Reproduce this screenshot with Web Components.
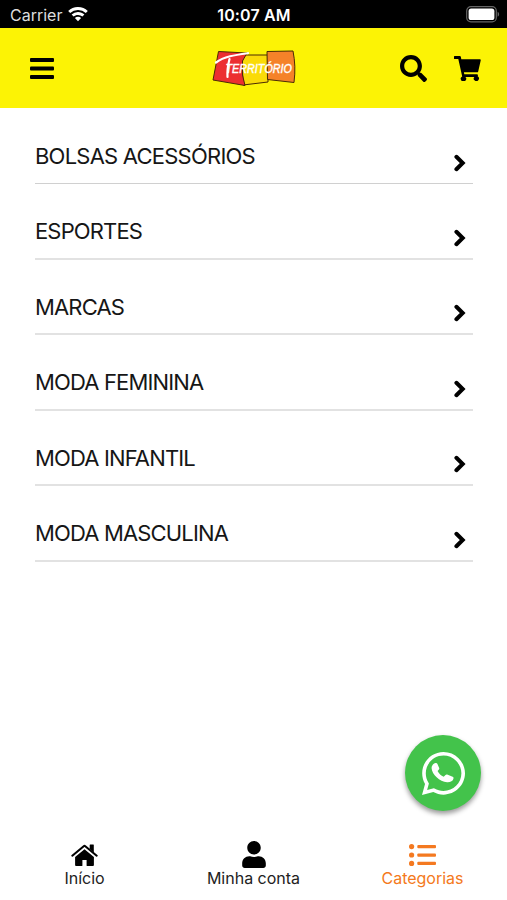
<!DOCTYPE html>
<html lang="pt-BR">
<head>
<meta charset="utf-8">
<title>Território</title>
<style>
  html, body {
    margin: 0;
    height: 100%;
    background: #fff;
    font-family: Inter, "Liberation Sans", sans-serif;
  }
</style>
</head>
<body>
<store-app></store-app>

<script>
const ICONS = {
  wifi: `<svg viewBox="0 0 20 15"><path fill="#fff" d="M10 0c3.9 0 7.3 1.5 9.8 3.9l-2 2.1A11.2 11.2 0 0 0 10 2.9 11.2 11.2 0 0 0 2.2 6l-2-2.1A14 14 0 0 1 10 0zM10 5c2.5 0 4.7.9 6.4 2.5l-2 2.1A6.3 6.3 0 0 0 10 7.9c-1.7 0-3.3.6-4.4 1.7l-2-2.1A9.2 9.2 0 0 1 10 5zM10 9.8c1.2 0 2.3.4 3.1 1.2L10 14.3 6.9 11c.8-.8 1.9-1.2 3.1-1.2z"/></svg>`,
  battery: `<svg viewBox="0 0 34 17"><rect x=".7" y=".7" width="29.6" height="15.2" rx="4.2" fill="none" stroke="#666" stroke-width="1.2"/><rect x="2.6" y="2.6" width="25.8" height="11.4" rx="2.6" fill="#fff"/><path fill="#666" d="M31.6 5.8c2 .9 2 4.1 0 5z"/></svg>`,
  menu: `<svg viewBox="0 0 24 21"><rect width="24" height="4" rx="1"/><rect y="8.5" width="24" height="4" rx="1"/><rect y="17" width="24" height="4" rx="1"/></svg>`,
  search: `<svg viewBox="0 0 512 512"><path d="M505 442.7L405.3 343c-4.5-4.5-10.6-7-17-7H372c27.6-35.3 44-79.7 44-128C416 93.1 322.9 0 208 0S0 93.1 0 208s93.1 208 208 208c48.3 0 92.7-16.4 128-44v16.3c0 6.4 2.5 12.5 7 17l99.7 99.7c9.4 9.4 24.6 9.4 33.9 0l28.3-28.3c9.4-9.4 9.4-24.6.1-34zM208 336c-70.7 0-128-57.2-128-128 0-70.7 57.2-128 128-128 70.7 0 128 57.2 128 128 0 70.7-57.2 128-128 128z"/></svg>`,
  cart: `<svg viewBox="0 0 27 25"><path d="M.6 0h5.2c.6 0 .9.3 1 .8l.5 2.5h18.4c.8 0 1.2.6 1 1.3l-2.5 10.8c-.1.6-.5.9-1.1.9H9.9l.4 1.9h12.6c.8 0 1.2.5 1 1.2l-.2.9a2.6 2.6 0 1 1-3.4.6H11.4a2.7 2.7 0 1 1-3.2-.5L4.3 3H.6C.2 3 0 2.7 0 2.4V.6C0 .2.2 0 .6 0z"/></svg>`,
  chevron: `<svg viewBox="0 0 12 18"><path d="M2.4 2.8 8.7 9l-6.3 6.2" fill="none" stroke="#000" stroke-width="4" stroke-linecap="round"/></svg>`,
  home: `<svg viewBox="0 0 27 22"><path d="M13.5 5.3 22.9 13v8c0 .6-.3 1-.9 1h-5.8c-.4 0-.6-.2-.6-.6V16h-4.2v5.4c0 .4-.2.6-.6.6H5c-.6 0-.9-.4-.9-1v-8z"/><path d="M1.3 11.7 12.7 2.2c.5-.4 1.1-.4 1.6 0l11.4 9.5" fill="none" stroke="#000" stroke-width="2.1" stroke-linecap="round"/><path d="M19.2.6h3.1c.3 0 .5.2.5.5v7.3l-4.1-3.5V1.1c0-.3.2-.5.5-.5z"/></svg>`,
  user: `<svg viewBox="0 0 448 512"><path d="M224 256c70.7 0 128-57.3 128-128S294.7 0 224 0 96 57.3 96 128s57.3 128 128 128zm89.6 32h-16.7c-22.2 10.2-46.9 16-72.9 16s-50.6-5.8-72.9-16h-16.7C60.2 288 0 348.2 0 422.4V464c0 26.5 21.5 48 48 48h352c26.5 0 48-21.5 48-48v-41.6c0-74.2-60.2-134.4-134.4-134.4z"/></svg>`,
  list: `<svg viewBox="0 0 27 22" fill="#f47920"><circle cx="2.6" cy="2.6" r="2.6"/><circle cx="2.6" cy="11" r="2.6"/><circle cx="2.6" cy="19.4" r="2.6"/><rect x="8.3" y="1" width="18.7" height="3.3" rx="1"/><rect x="8.3" y="9.4" width="18.7" height="3.3" rx="1"/><rect x="8.3" y="17.8" width="18.7" height="3.3" rx="1"/></svg>`,
  whatsapp: `<svg viewBox="0 32 448 448" fill="#fff"><path d="M380.9 97.1C339 55.1 283.2 32 223.9 32c-122.4 0-222 99.6-222 222 0 39.1 10.2 77.3 29.6 111L0 480l117.7-30.9c32.4 17.7 68.9 27 106.1 27h.1c122.3 0 224.1-99.6 224.1-222 0-59.3-25.2-115-67.1-157zm-157 341.6c-33.2 0-65.7-8.9-94-25.7l-6.7-4-69.8 18.3L72 359.2l-4.4-7c-18.5-29.4-28.2-63.3-28.2-98.2 0-101.7 82.8-184.5 184.6-184.5 49.3 0 95.6 19.2 130.4 54.1 34.8 34.9 56.2 81.2 56.1 130.5 0 101.8-84.9 184.6-186.6 184.6z"/><path d="M123 154c10-11 31-13 38 3l17 38c4 9 2 15-4 22l-12 14c14 27 36 47 64 60l19-20c5-5 10-7 17-4l57 22c9 4 11 9 9 18-4 28-36 42-66 40-79-9-158-82-162-147-1-20 10-35 23-46z"/></svg>`
};

class AppIcon extends HTMLElement {
  connectedCallback() {
    let shadowRoot = this.attachShadow({ mode: "open" });
    shadowRoot.innerHTML = `
      <style>
        :host { display: block; flex: none; }
        svg { display: block; width: 100%; height: 100%; }
      </style>
      ${ICONS[this.getAttribute("name")]}
    `;
  }
}

class StatusBar extends HTMLElement {
  connectedCallback() {
    let shadowRoot = this.attachShadow({ mode: "open" });
    shadowRoot.innerHTML = `
      <style>
        :host {
          display: grid;
          grid-template-columns: 1fr auto 1fr;
          align-items: center;
          box-sizing: border-box;
          height: 28px;
          padding: 2px 7px 0 10px;
          background: #000;
          color: #ddd;
          font-size: 16px;
        }
        .carrier { display: flex; align-items: center; gap: 6px; }
        .time { color: #fff; font-weight: 600; letter-spacing: 0.15px; margin-left: -2px; }
        .wifi { width: 20px; height: 15px; margin-top: -1px; }
        .battery { width: 34px; height: 17px; justify-self: end; margin-top: -2px; }
      </style>
      <div class="carrier"><span>Carrier</span><app-icon class="wifi" name="wifi"></app-icon></div>
      <div class="time">10:07 AM</div>
      <app-icon class="battery" name="battery"></app-icon>
    `;
  }
}

class StoreLogo extends HTMLElement {
  connectedCallback() {
    let shadowRoot = this.attachShadow({ mode: "open" });
    shadowRoot.innerHTML = `
      <style>
        :host { display: block; width: 84px; height: 37px; }
        svg { display: block; overflow: visible; }
        text {
          font-family: "Liberation Sans", sans-serif;
          font-size: 12.5px;
          font-style: italic;
          fill: #fff;
          stroke: #fff;
          stroke-width: 0.4;
        }
      </style>
      <svg width="84" height="37" viewBox="0 0 84 37">
        <g stroke="#4a2a05" stroke-width="1" stroke-linejoin="round">
          <path fill="#fadb08" d="M30 5h26v27L31 35z"/>
          <path fill="#ec2f31" d="M6.5 1.5 35 3l-4.5 8v14l2.5 10.5L1 30z"/>
          <path fill="#f58229" d="M55 1.5 81 1c2 10 2.5 20 1 31.5L55.5 29.5z"/>
        </g>
        <path d="M4 12.5C12 6.5 23 5 36 3.2M17.5 9c-1.5 6-2.5 11-2 18" fill="none" stroke="#fff" stroke-width="2.2" stroke-linecap="round"/>
        <text x="13.5" y="22.5" textLength="66.5" lengthAdjust="spacingAndGlyphs">TERRITÓRIO</text>
      </svg>
    `;
  }
}

class AppHeader extends HTMLElement {
  connectedCallback() {
    let shadowRoot = this.attachShadow({ mode: "open" });
    shadowRoot.innerHTML = `
      <style>
        :host {
          display: grid;
          grid-template-columns: 1fr auto 1fr;
          align-items: center;
          box-sizing: border-box;
          height: 80px;
          padding: 0 26.5px 0 29.5px;
          background: #fcf305;
        }
        .menu { width: 24px; height: 21px; }
        store-logo { margin-left: -2px; }
        .actions { display: flex; justify-content: flex-end; align-items: center; gap: 27px; }
        .search { width: 27px; height: 27px; }
        .cart { width: 27px; height: 25px; }
      </style>
      <app-icon class="menu" name="menu"></app-icon>
      <store-logo></store-logo>
      <div class="actions">
        <app-icon class="search" name="search"></app-icon>
        <app-icon class="cart" name="cart"></app-icon>
      </div>
    `;
  }
}

class CategoryItem extends HTMLElement {
  connectedCallback() {
    let shadowRoot = this.attachShadow({ mode: "open" });
    shadowRoot.innerHTML = `
      <style>
        :host {
          display: flex;
          justify-content: space-between;
          align-items: flex-end;
          box-sizing: border-box;
          height: 75.5px;
          padding: 0 7px 12px 0;
          border-bottom: 2px solid #e2e2e2;
          color: #161616;
          font-size: 22px;
          letter-spacing: -0.85px;
        }
        :host(:first-of-type) {
          height: 76px;
          padding-bottom: 12.25px;
          border-bottom: 1px solid #d0d0d0;
          letter-spacing: -0.77px;
        }
        .label { line-height: 30px; margin-bottom: -0.5px; }
        app-icon { width: 12px; height: 18px; margin-bottom: -1px; }
      </style>
      <span class="label"><slot></slot></span>
      <app-icon name="chevron"></app-icon>
    `;
  }
}

class WhatsappButton extends HTMLElement {
  connectedCallback() {
    let shadowRoot = this.attachShadow({ mode: "open" });
    shadowRoot.innerHTML = `
      <style>
        :host {
          position: absolute;
          right: 26px;
          bottom: 89px;
          display: flex;
          align-items: center;
          justify-content: center;
          width: 76px;
          height: 76px;
          border-radius: 50%;
          background: #43c34b;
          box-shadow: 0 3px 5px rgba(0, 0, 0, 0.4);
        }
        app-icon { width: 43px; height: 43px; }
      </style>
      <app-icon name="whatsapp"></app-icon>
    `;
  }
}

class TabItem extends HTMLElement {
  connectedCallback() {
    let shadowRoot = this.attachShadow({ mode: "open" });
    shadowRoot.innerHTML = `
      <style>
        :host {
          display: flex;
          flex: 1;
          flex-direction: column;
          align-items: center;
          color: #222;
          font-size: 16px;
        }
        :host([active]) { color: #f47920; }
        .icon { display: flex; align-items: center; height: 28px; }
        .home, .list { width: 27px; height: 22px; }
        .user { width: 24px; height: 27px; margin-top: -1px; }
        .label { line-height: 18px; }
      </style>
      <div class="icon"><app-icon class="${this.getAttribute("icon")}" name="${this.getAttribute("icon")}"></app-icon></div>
      <span class="label"><slot></slot></span>
    `;
  }
}

class StoreApp extends HTMLElement {
  connectedCallback() {
    let shadowRoot = this.attachShadow({ mode: "open" });
    shadowRoot.innerHTML = `
      <style>
        :host {
          position: relative;
          display: flex;
          flex-direction: column;
          height: 900px;
          overflow: hidden;
        }
        main { flex: 1; padding: 0 34px 0 35px; }
        nav { display: flex; height: 59px; }
      </style>
      <status-bar></status-bar>
      <app-header></app-header>
      <main>
        <category-item>BOLSAS ACESSÓRIOS</category-item>
        <category-item>ESPORTES</category-item>
        <category-item>MARCAS</category-item>
        <category-item>MODA FEMININA</category-item>
        <category-item>MODA INFANTIL</category-item>
        <category-item>MODA MASCULINA</category-item>
      </main>
      <nav>
        <tab-item icon="home">Início</tab-item>
        <tab-item icon="user">Minha conta</tab-item>
        <tab-item icon="list" active>Categorias</tab-item>
      </nav>
      <whatsapp-button></whatsapp-button>
    `;
  }
}

window.customElements.define("app-icon", AppIcon);
window.customElements.define("status-bar", StatusBar);
window.customElements.define("store-logo", StoreLogo);
window.customElements.define("app-header", AppHeader);
window.customElements.define("category-item", CategoryItem);
window.customElements.define("whatsapp-button", WhatsappButton);
window.customElements.define("tab-item", TabItem);
window.customElements.define("store-app", StoreApp);
</script>
</body>
</html>
